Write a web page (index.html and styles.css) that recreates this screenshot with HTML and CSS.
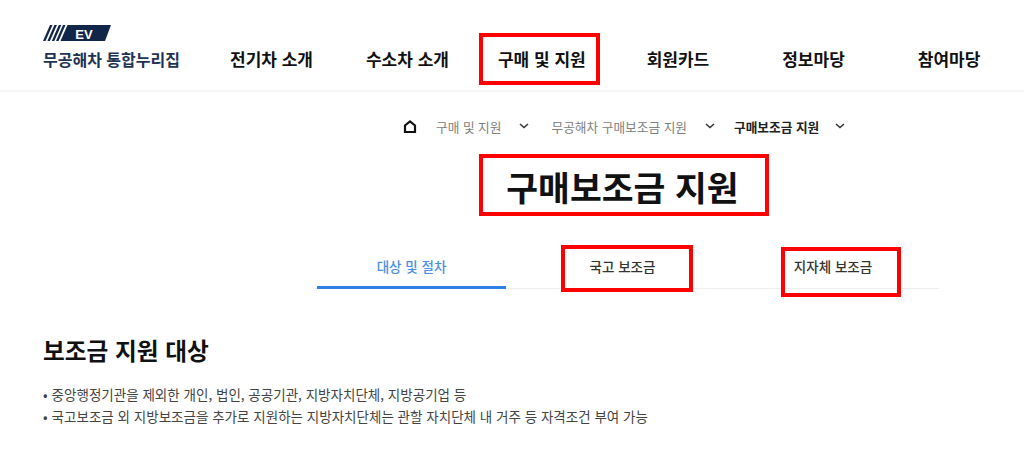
FILE: index.html
```html
<!DOCTYPE html>
<html lang="ko">
<head>
<meta charset="utf-8">
<title>구매보조금 지원</title>
<link rel="stylesheet" href="styles.css">
</head>
<body>
<header class="header">
  <div class="logo">
    <svg class="logo-mark" width="70" height="18" viewBox="0 0 70 18">
      <path class="navy" d="M7 1h2.500L2.500 17H0zM11.400 1h2.500L6.900 17H4.400zM15.800 1h2.500l-7 16H8.800zM20 1h2.500l-7 16H13zM24.500 1h43.500l-6 16H17.500z"/>
      <text class="logo-ev" x="41" y="14.500">EV</text>
    </svg>
    <span class="logo-text">무공해차 통합누리집</span>
  </div>
  <nav class="nav">
    <a>전기차 소개</a>
    <a class="gap-a">수소차 소개</a>
    <a>구매 및 지원</a>
    <a class="gap-c">회원카드</a>
    <a class="gap-b">정보마당</a>
    <a class="gap-b">참여마당</a>
  </nav>
</header>
<div class="crumbs">
  <svg class="home" width="14" height="13" viewBox="0 0 14 13"><path d="M2 12V5.500L7 1.500l5 4V12z"/></svg>
  <span class="crumb">구매 및 지원</span>
  <svg class="chev chev-wide" width="10" height="6" viewBox="0 0 10 6"><path d="M1 1l4 3.500L9 1"/></svg>
  <span class="crumb">무공해차 구매보조금 지원</span>
  <svg class="chev" width="10" height="6" viewBox="0 0 10 6"><path d="M1 1l4 3.500L9 1"/></svg>
  <span class="crumb current">구매보조금 지원</span>
  <svg class="chev chev-last" width="10" height="6" viewBox="0 0 10 6"><path d="M1 1l4 3.500L9 1"/></svg>
</div>
<h1 class="title"><span class="mark mark-title"></span>구매보조금 지원</h1>
<div class="tabs">
  <a class="tab active">대상 및 절차</a>
  <a class="tab tab-mid">국고 보조금<span class="mark mark-tab1"></span></a>
  <a class="tab tab-last">지자체 보조금<span class="mark mark-tab2"></span></a>
</div>
<main class="content">
  <h2 class="heading">보조금 지원 대상</h2>
  <ul class="list">
    <li>중앙행정기관을 제외한 개인, 법인, 공공기관, 지방자치단체, 지방공기업 등</li>
    <li>국고보조금 외 지방보조금을 추가로 지원하는 지방자치단체는 관할 자치단체 내 거주 등 자격조건 부여 가능</li>
  </ul>
</main>
<span class="mark mark-nav"></span>
</body>
</html>
```
FILE: styles.css
```css
* { box-sizing: border-box; }
html, body { margin: 0; padding: 0; }
body {
  position: relative;
  height: 473px;
  overflow: hidden;
  background: #fff;
  color: #111;
  font-family: "Noto Sans CJK KR", "Noto Sans", sans-serif;
}
.header {
  display: flex;
  height: 92px;
  padding: 24px 0 0 43px;
  border-bottom: 2px solid #f5f5f5;
}
.logo { display: flex; flex-direction: column; align-items: flex-start; gap: 5px; width: 187px; }
.logo-mark { display: block; }
.navy { fill: #12264a; }
.logo-ev { fill: #fff; font: 700 13px "Liberation Sans", sans-serif; text-anchor: middle; }
.logo-text { font-size: 16px; line-height: 24px; font-weight: 700; color: #1f3352; white-space: nowrap; }
.nav { display: flex; gap: 49px; padding-top: 22px; }
.nav a { font-size: 17px; line-height: 26px; font-weight: 700; color: #111; white-space: nowrap; }
.gap-a { margin-left: 4px; }
.gap-b { margin-left: 24px; }
.gap-c { margin-left: 12px; }
.crumbs {
  display: flex;
  align-items: center;
  height: 24px;
  margin-top: 22px;
  padding-left: 403px;
  font-size: 12.700px;
  color: #808080;
}
.home { margin-right: 19px; }
.home path { fill: none; stroke: #111; stroke-width: 2.200; }
.crumb { white-space: nowrap; }
.current { font-weight: 700; color: #222; }
.chev { margin: 0 19px 0 18px; }
.chev-wide { margin-right: 22px; }
.chev-last { margin-left: 16px; }
.chev path { fill: none; stroke: #333; stroke-width: 1.500; }
.title {
  position: relative;
  width: 290px;
  margin: 22px 0 0 479px;
  padding-right: 3px;
  font-size: 34.600px;
  line-height: 52px;
  font-weight: 700;
  color: #111;
  text-align: center;
}
.tabs {
  display: flex;
  width: 624px;
  height: 44px;
  margin: 33px 0 0 315px;
  border-bottom: 1px solid #eee;
}
.tab {
  position: relative;
  font-size: 13.500px;
  line-height: 42px;
  font-weight: 500;
  color: #333;
  text-align: center;
}
.active { width: 189px; margin-left: 2px; color: #4a90e2; border-bottom: 3px solid #2f80e4; height: 44px; }
.tab-mid { width: 233px; }
.tab-last { width: 188px; }
.content { padding: 43px 0 0 43px; }
.heading { margin: 0; font-size: 23.700px; line-height: 36px; font-weight: 700; color: #111; }
.list { list-style: none; margin: 15px 0 0; padding: 0; font-size: 13.520px; line-height: 22px; color: #444; }
.list li::before { content: "•"; margin-right: 4px; }
.mark { position: absolute; border: 4px solid #f00; }
.mark-nav { left: 479px; top: 33px; width: 121px; height: 52px; }
.mark-title { left: 0; top: -6px; width: 290px; height: 62px; }
.mark-tab1 { left: 55px; top: 0; width: 132px; height: 47px; }
.mark-tab2 { left: 42px; top: 2px; width: 120px; height: 50px; }
```
